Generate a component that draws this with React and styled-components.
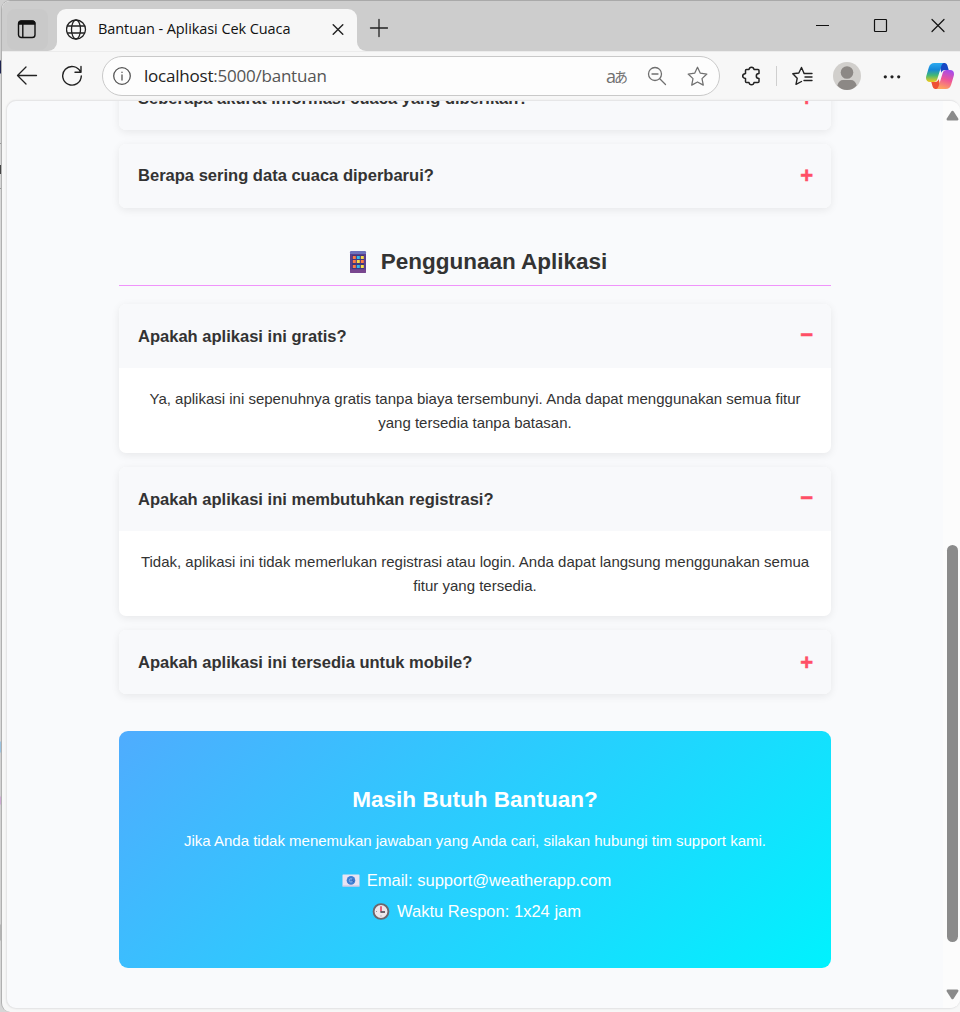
import React from 'react';
import styled, { createGlobalStyle } from 'styled-components';

const Global = createGlobalStyle`
  * { box-sizing: border-box; }
  body { margin: 0; background: #cdcdcd; font-family: "Liberation Sans", Arial, sans-serif; }
  h2, h3, p { margin: 0; }
  svg { display: block; flex: none; }
`;

const Desktop = styled.div`
  width: 960px;
  height: 1012px;
  display: flex;
  overflow: hidden;
  background: linear-gradient(#cfcfcf 0 60px, #1e2450 61px 73px, #d6d6d6 74px 143px, #999 143px 144px, #d6d6d6 144px 165px,
    #444 165px 174px, #d6d6d6 174px 188px, #999 188px 189px, #d8d8d8 189px 741px, #9cc3e0 742px 752px, #d2d2d2 753px 796px,
    #ceabd4 797px 804px, #d2d2d2 805px 924px, #b5b5b5 925px 940px, #d6d6d6 941px);
`;
const Browser = styled.div`
  width: 959px;
  margin-left: 1px;
  height: 1012px;
  display: flex;
  flex-direction: column;
  background: #f7f7f7;
  border-left: 1px solid #b0b0b0;
  border-top: 1px solid #a9a9a9;
  border-radius: 9px 0 0 9px;
  overflow: hidden;
`;
const TitleBar = styled.div`
  height: 50px;
  flex: none;
  display: flex;
  background: #f7f7f7;
`;
const TabActions = styled.div`
  width: 55px;
  background: #cdcdcd;
  border-bottom-right-radius: 9px;
  padding: 8px 9px 1px 5px;
`;
const TabActionsButton = styled.div`
  height: 41px;
  border-radius: 8px;
  background: #c9c9c9;
  display: flex;
  align-items: center;
  padding: 0 0 2px 10px;
`;
const TabSlot = styled.div`
  width: 300px;
  background: #cdcdcd;
  padding-top: 8px;
`;
const Tab = styled.div`
  height: 42px;
  background: #f7f7f7;
  border-radius: 9px 9px 0 0;
  display: flex;
  align-items: center;
  padding: 0 13px 2px 9px;
`;
const TabTitle = styled.span`
  flex: 1;
  margin-left: 11px;
  font: 400 14.5px/20px "Open Sans", "Noto Sans", sans-serif;
  letter-spacing: -0.08px;
  color: #111;
  white-space: nowrap;
`;
const TabStrip = styled.div`
  flex: 1;
  background: #cdcdcd;
  border-bottom-left-radius: 9px;
  display: flex;
  justify-content: space-between;
  padding: 17px 14px 0 12px;
`;
const WindowButtons = styled.div`
  display: flex;
  gap: 42px;
  margin-top: -1px;
`;
const Toolbar = styled.div`
  height: 49px;
  flex: none;
  display: flex;
  align-items: center;
  padding-left: 14px;
  border-top: 1px solid #ececec;
`;
const AddressBar = styled.div`
  width: 618px;
  height: 40px;
  margin-left: 19px;
  border: 1px solid #c9c9c9;
  border-radius: 20px;
  background: #fdfdfd;
  display: flex;
  align-items: center;
  padding: 0 11px 0 9px;
`;
const Url = styled.span`
  flex: 1;
  margin-left: 12px;
  font: 400 17px/24px "Open Sans", "Noto Sans", sans-serif;
  letter-spacing: -0.22px;
  color: #555;
`;
const UrlHost = styled.span`
  color: #222;
`;
const Translate = styled.span`
  font: 400 18px/20px "Open Sans", "Noto Sans CJK JP", sans-serif;
  color: #707070;
  display: flex;
  align-items: center;
  margin-right: 19px;
`;
const Kana = styled.span`
  font: 400 14px/20px "Noto Sans CJK JP", sans-serif;
  margin-left: -2px;
`;
const Tools = styled.div`
  flex: 1;
  display: flex;
  align-items: center;
  padding-left: 21px;
`;
const Divider = styled.div`
  width: 1px;
  height: 20px;
  margin: 0 14px 0 15px;
  background: #cfcfcf;
`;
const Viewport = styled.div`
  height: 909px;
  flex: none;
  margin-left: 4px;
  display: flex;
  border: 1px solid #e6e6e7;
  border-right: 0;
  border-radius: 10px;
  background: #f9fafc;
  overflow: hidden;
  box-shadow: 0 0 2px rgba(0, 0, 0, 0.08);
`;
const Page = styled.main`
  width: 936px;
  padding: 0 112px;
  color: #333;
`;
const Scrollbar = styled.div`
  flex: 1;
  background: #fcfcfc;
  display: flex;
  flex-direction: column;
  align-items: center;
  padding: 9px 0 8px 1px;
`;
const Thumb = styled.div`
  width: 11px;
  height: 397px;
  margin-top: 424px;
  margin-bottom: auto;
  border-radius: 6px;
  background: #8b8b8b;
`;
const FaqItem = styled.section`
  margin-bottom: 14px;
  border-radius: 7px;
  background: #fff;
  box-shadow: 0 2px 9px rgba(0, 0, 0, 0.08);
  overflow: hidden;
`;
const FaqList = styled.div`
  margin-top: ${(p) => p.$offset}px;
`;
const Question = styled.div`
  height: 64px;
  padding: ${(p) => (p.$raised ? '0 18px 1px 19px' : '1px 18px 0 19px')};
  background: #f8f9fb;
  display: flex;
  align-items: center;
  justify-content: space-between;
  font-size: 16.55px;
  font-weight: 700;
`;
const Sign = styled.span`
  color: #ff4f66;
  font-size: 22px;
  line-height: 24px;
  -webkit-text-stroke: 0.5px #ff4f66;
  padding-bottom: ${(p) => (p.$open ? 4 : 0)}px;
`;
const Answer = styled.p`
  height: 85px;
  padding: 19px 18px 0;
  font-size: 15px;
  line-height: 24px;
  text-align: center;
  white-space: nowrap;
`;
const SectionTitle = styled.h2`
  height: 50px;
  margin-top: 28px;
  padding-top: 2px;
  border-bottom: 1px solid #f093fb;
  display: flex;
  align-items: center;
  justify-content: center;
  gap: 13px;
  font-size: 22.5px;
`;
const Contact = styled.section`
  margin-top: 37px;
  height: 237px;
  padding-top: 49px;
  border-radius: 9px;
  background: linear-gradient(135deg, #4facfe 0%, #00f2fe 100%);
  color: #fff;
  text-align: center;
`;
const ContactTitle = styled.h3`
  font-size: 22.55px;
  line-height: 40px;
`;
const ContactText = styled.p`
  margin: 9px 0 12px;
  font-size: 15px;
  line-height: 24px;
`;
const ContactLine = styled.p`
  display: flex;
  align-items: center;
  justify-content: center;
  gap: 7px;
  height: 31px;
  padding-left: 3px;
  font-size: 16.55px;
`;

const Line = ({ w = 20, h = w, box = `0 0 ${w} ${h}`, color = '#222', sw = 1.3, children }) => (
  <svg width={w} height={h} viewBox={box} fill="none" stroke={color} strokeWidth={sw} strokeLinecap="round" strokeLinejoin="round">
    {children}
  </svg>
);
const Spaced = styled.div`
  margin-left: ${(p) => p.$left}px;
`;

const Phone = () => (
  <svg width="25" height="22" viewBox="-7 0 25 22">
    <rect x="0" width="16" height="22" rx="1.5" fill="#5b3f8c" />
    <path d="M0 3V1.500Q0 0 1.500 0h13Q16 0 16 1.500V3z" fill="#6d72bd" />
    <rect x="2" y="4" width="12" height="14" fill="#41377d" />
    <rect x="0" y="18.500" width="16" height="3.500" rx="1" fill="#79468f" />
    {[5, 9, 14].map((y, r) =>
      [3, 7, 11].map((x, c) => (
        <rect key={x + '-' + y} x={x - 0.200} y={y} width="3" height="3" fill={[['#ff7a45', '#33b9ec', '#f7d84b'], ['#ff7a45', '#f7d84b', '#ff7a45'], ['#ff7a45', '#33b9ec', '#f7e04b']][r][c]} />
      ))
    )}
  </svg>
);
const Mail = () => (
  <svg width="18" height="13" viewBox="0 0 18 13">
    <rect x="0.5" y="0.5" width="17" height="12" rx="0.6" fill="#e9e3f2" />
    <path d="M0.5 11.5h17v1h-17z" fill="#c9bfe0" />
    <circle cx="9" cy="6.4" r="4.3" fill="#3f7fd4" />
    <circle cx="9" cy="6.4" r="1.7" fill="none" stroke="#9cc0f0" strokeWidth="0.8" />
    <path d="M10.7 5v2.2q1 1 1.4-.5" fill="none" stroke="#244fa3" strokeWidth=".8" />
  </svg>
);
const Clock = () => (
  <svg width="18" height="18" viewBox="0 0 18 18">
    <circle cx="9" cy="8.500" r="7.400" fill="#eee8ec" stroke="#6d666c" strokeWidth="1.900" />
    <path d="M9 8.500V3.200" stroke="#e3405f" strokeWidth="1.600" />
    <path d="M8.400 9H13" stroke="#4b4550" strokeWidth="1.600" />
    <path d="M9 12.500v1M4 8.500h1" stroke="#9a929a" strokeWidth="1" />
  </svg>
);
const Copilot = () => (
  <svg width="28" height="26" viewBox="0 0 28 26">
    <defs>
      <linearGradient id="cpA" x1="0" y1="0" x2="0" y2="1">
        <stop offset="0" stopColor="#2caaf0" />
        <stop offset=".35" stopColor="#1688d8" />
        <stop offset=".65" stopColor="#43b875" />
        <stop offset="1" stopColor="#f4cc1c" />
      </linearGradient>
      <linearGradient id="cpB" x1=".7" y1="0" x2=".4" y2="1">
        <stop offset="0" stopColor="#a24bee" />
        <stop offset=".5" stopColor="#ee5598" />
        <stop offset="1" stopColor="#ffa45e" />
      </linearGradient>
    </defs>
    <path d="M13 0h5.500c1.600 0 2.400.9 2.900 2.400l1.300 4.500h-3.500c-2.300 0-3.300.8-3.900 2.900z" fill="#1748c4" />
    <path d="M15 26H9.500c-1.600 0-2.400-.9-2.900-2.400L5.300 19h3.500c2.300 0 3.300-.8 3.900-2.900z" fill="#ee5135" />
    <path d="M8.300 0h9.700c-1.500.3-2.200 1.400-2.700 3l-3.900 12.800C10.700 18 9.500 19 7.500 19H4c-3.500 0-4.600-2.700-3.700-6L2.800 4.500C3.700 1.500 5.400 0 8.300 0z" fill="url(#cpA)" />
    <path d="M19.700 26H10c1.500-.3 2.200-1.400 2.700-3l3.900-12.800C17.300 8 18.500 7 20.500 7H24c3.500 0 4.600 2.700 3.700 6l-2.500 8.500c-.9 3-2.600 4.500-5.500 4.500z" fill="url(#cpB)" />
  </svg>
);
const STAR = 'M10 1.200l2.700 5.700 6.200.8-4.600 4.300 1.200 6.200L10 15.200l-5.500 3 1.200-6.200L1.100 7.700l6.200-.8z';

const Faq = ({ q, raised, children }) => (
  <FaqItem>
    <Question $raised={raised}>
      <span>{q}</span>
      <Sign $open={Boolean(children)}>{children ? '−' : '+'}</Sign>
    </Question>
    {children && <Answer>{children}</Answer>}
  </FaqItem>
);

export default function App() {
  return (
    <Desktop>
      <Global />
      <Browser>
        <TitleBar>
          <TabActions>
            <TabActionsButton>
              <Line w={20} color="#111" sw={1.4}>
                <rect x="1.500" y="2" width="16.500" height="16.500" rx="2.800" />
                <path d="M1.800 5V4.500q0-2.200 2.200-2.200h11.500q2.200 0 2.200 2.200V5z" fill="#111" />
                <path d="M5.800 5v13" />
              </Line>
            </TabActionsButton>
          </TabActions>
          <TabSlot>
            <Tab>
              <Line w={21} sw={1.3}>
                <circle cx="10" cy="10.500" r="9.500" />
                <ellipse cx="10" cy="10.500" rx="4.500" ry="9.500" />
                <path d="M1.500 7h17M1.500 14h17" />
              </Line>
              <TabTitle>Bantuan - Aplikasi Cek Cuaca</TabTitle>
              <Line w={12} sw={1.4}><path d="M1.200 1.700l9.600 9.600M10.800 1.700l-9.600 9.600" /></Line>
            </Tab>
          </TabSlot>
          <TabStrip>
            <Line w={20} sw={1.3}><path d="M10 1.500v17M1.500 10h17" /></Line>
            <WindowButtons>
              <Line w={16} color="#111" sw={1.2}><path d="M2 8.500h13" strokeLinecap="butt" /></Line>
              <Line w={16} color="#111" sw={1.2}><rect x="2.500" y="2.500" width="12" height="12" rx=".7" /></Line>
              <Line w={16} color="#111" sw={1.2}><path d="M2 2.500l12 12M14 2.500l-12 12" /></Line>
            </WindowButtons>
          </TabStrip>
        </TitleBar>
        <Toolbar>
          <Line w={22} sw={1.3}><path d="M20.500 10.500H1.500M10 2L1.500 10.500l8.500 8.500" /></Line>
          <Spaced $left={23}>
            <Line w={22} sw={1.4}><path d="M19.500 7A9.300 9.300 0 1 0 20.300 11M20 1.500V7.200H14" /></Line>
          </Spaced>
          <AddressBar>
            <Line w={20} color="#555" sw={1.3}>
              <circle cx="10" cy="10" r="8.300" />
              <path d="M10 9v5M10 6.200v.2" />
            </Line>
            <Url><UrlHost>localhost</UrlHost>:5000/bantuan</Url>
            <Translate>a<Kana>あ</Kana></Translate>
            <Line w={20} color="#707070">
              <circle cx="8" cy="8" r="6.500" />
              <path d="M13 13l5.500 5.500M5 8h6" />
            </Line>
            <Spaced $left={20}><Line w={21} box="0 0 20 20" color="#707070" sw={1.2}><path d={STAR} /></Line></Spaced>
          </AddressBar>
          <Tools>
            <Line w={20} sw={1.5}>
              <path d="M5.500 3.500H8Q8.300 1.200 10.500 1.200T13 3.500h4q1 0 1 1V7.500q-2.700 0-2.700 2.500T18 12.500V15.500q0 1-1 1H13Q12.700 18.800 10.500 18.800T8 16.500H5.500q-1 0-1-1V12.500Q1.700 12 1.700 10T4.500 7.500v-3q0-1 1-1z" />
            </Line>
            <Divider />
            <Line w={22} h={20} sw={1.4}>
              <path d="M13 7.200L10.500 1.500 7.800 7 1.800 7.800l4.400 4.500-1.200 6 5.500-2.800M13 7.500h8M14 11h7M13 14.500h8" />
            </Line>
            <Spaced $left={20}>
              <svg width="28" height="28" viewBox="0 0 28 28">
                <circle cx="14" cy="14" r="14" fill="#d1cfcc" />
                <circle cx="14" cy="10.500" r="6.300" fill="#8c8885" />
                <path d="M4.300 23.500Q6 18 10 18h8q4 0 5.700 5.500Q19.500 28 14 28T4.300 23.500z" fill="#8c8885" />
              </svg>
            </Spaced>
            <Spaced $left={22}>
              <svg width="18" height="6" viewBox="0 0 18 6" fill="#222">
                <circle cx="2.300" cy="3.800" r="1.600" /><circle cx="9" cy="3.800" r="1.600" /><circle cx="15.700" cy="3.800" r="1.600" />
              </svg>
            </Spaced>
            <Spaced $left={25}><Copilot /></Spaced>
          </Tools>
        </Toolbar>
        <Viewport>
          <Page>
            <FaqList $offset={-35}>
              <Faq q="Seberapa akurat informasi cuaca yang diberikan?" />
              <Faq raised q="Berapa sering data cuaca diperbarui?" />
            </FaqList>
            <SectionTitle><Phone />Penggunaan Aplikasi</SectionTitle>
            <FaqList $offset={18}>
              <Faq q="Apakah aplikasi ini gratis?">
                Ya, aplikasi ini sepenuhnya gratis tanpa biaya tersembunyi. Anda dapat menggunakan semua fitur<br />yang tersedia tanpa batasan.
              </Faq>
              <Faq q="Apakah aplikasi ini membutuhkan registrasi?">
                Tidak, aplikasi ini tidak memerlukan registrasi atau login. Anda dapat langsung menggunakan semua<br />fitur yang tersedia.
              </Faq>
              <Faq q="Apakah aplikasi ini tersedia untuk mobile?" />
            </FaqList>
            <Contact>
              <ContactTitle>Masih Butuh Bantuan?</ContactTitle>
              <ContactText>Jika Anda tidak menemukan jawaban yang Anda cari, silakan hubungi tim support kami.</ContactText>
              <ContactLine><Mail />Email: support@weatherapp.com</ContactLine>
              <ContactLine><Clock />Waktu Respon: 1x24 jam</ContactLine>
            </Contact>
          </Page>
          <Scrollbar>
            <svg width="13" height="11" viewBox="0 0 13 11"><path d="M6.500 2L11.200 9.200H1.800z" fill="#8b8b8b" stroke="#8b8b8b" strokeWidth="2.500" strokeLinejoin="round" /></svg>
            <Thumb />
            <svg width="13" height="11" viewBox="0 0 13 11"><path d="M6.500 9L11.200 1.800H1.800z" fill="#8b8b8b" stroke="#8b8b8b" strokeWidth="2.500" strokeLinejoin="round" /></svg>
          </Scrollbar>
        </Viewport>
      </Browser>
    </Desktop>
  );
}
